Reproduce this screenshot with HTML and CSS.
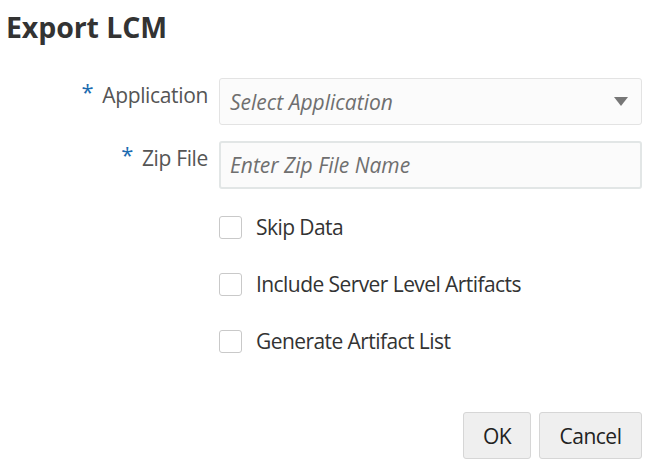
FILE: index.html
```html
<!DOCTYPE html>
<html>
<head>
<meta charset="utf-8">
<link rel="stylesheet" href="styles.css">
</head>
<body>
<div class="dialog">
  <h1 class="title">Export LCM</h1>
  <div class="form">
    <div class="label"><span class="req">*</span>Application</div>
    <div class="select">
      <span class="placeholder">Select Application</span>
      <svg class="caret" width="14" height="9" viewBox="0 0 14 9"><path d="M0 0H14L7 9Z" fill="#777"/></svg>
    </div>
    <div class="label"><span class="req">*</span>Zip File</div>
    <div class="input"><span class="placeholder">Enter Zip File Name</span></div>
    <div></div>
    <div class="checks">
      <label class="check"><span class="box"></span>Skip Data</label>
      <label class="check"><span class="box"></span>Include Server Level Artifacts</label>
      <label class="check"><span class="box"></span>Generate Artifact List</label>
    </div>
  </div>
  <div class="buttons">
    <button class="btn ok">OK</button>
    <button class="btn cancel">Cancel</button>
  </div>
</div>
</body>
</html>
```
FILE: styles.css
```css
html, body {
  margin: 0;
  padding: 0;
  background: #fff;
}
body {
  font-family: "Segoe UI", "Open Sans", "Noto Sans", sans-serif;
  width: 650px;
  height: 470px;
  overflow: hidden;
}
.dialog {
  padding: 10px 8px 0 6px;
}
.title {
  margin: 0;
  font-size: 28.5px;
  font-weight: 700;
  color: #333;
  line-height: 34px;
  letter-spacing: -0.1px;
}
.form {
  display: grid;
  grid-template-columns: 202px 423px;
  column-gap: 11px;
  row-gap: 16px;
  margin-top: 34px;
}
.label {
  text-align: right;
  font-size: 21px;
  color: #555;
  padding-top: 2px;
  line-height: 28px;
  letter-spacing: -0.35px;
}
.req {
  color: #1b6bb0;
  font-size: 22px;
  margin-right: 9px;
  position: relative;
  top: -3px;
}
.select, .input {
  box-sizing: border-box;
  height: 47px;
  border: 1px solid #e3e3e3;
  border-radius: 3px;
  background: #fbfbfb;
  display: flex;
  align-items: center;
  padding: 0 13px 0 10px;
}
.input {
  border: 2px solid #e2e6e6;
  height: 48px;
  padding-left: 9px;
}
.select {
  justify-content: space-between;
}
.placeholder {
  font-style: italic;
  font-size: 21px;
  color: #6f6f6f;
}
.checks {
  display: flex;
  flex-direction: column;
  gap: 33px;
  padding-top: 10px;
}
.check {
  display: flex;
  align-items: center;
  font-size: 21px;
  color: #333;
  height: 24px;
  letter-spacing: -0.57px;
}
.box {
  box-sizing: border-box;
  width: 23px;
  height: 23px;
  border: 1px solid #c9c9c9;
  border-radius: 3px;
  background: #fff;
  margin-right: 14px;
}
.buttons {
  display: flex;
  justify-content: flex-end;
  gap: 8px;
  margin-top: 59px;
}
.btn {
  box-sizing: border-box;
  height: 47px;
  border: 1px solid #d6d6d6;
  border-radius: 3px;
  background: #efefef;
  font-family: inherit;
  font-size: 21px;
  letter-spacing: -0.5px;
  color: #222;
  padding: 0;
}
.ok { width: 68px; }
.cancel { width: 103px; }
```
